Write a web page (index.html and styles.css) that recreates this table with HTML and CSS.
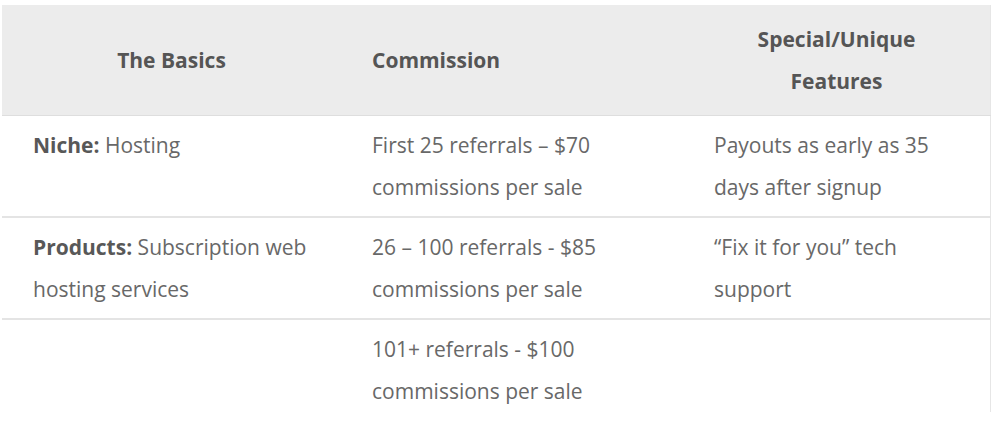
FILE: index.html
```html
<!DOCTYPE html>
<html>
<head>
<meta charset="utf-8">
<link rel="stylesheet" href="styles.css">
</head>
<body>
<table class="aff">
  <thead>
    <tr>
      <th class="c1 center">The Basics</th>
      <th class="c2">Commission</th>
      <th class="c3 center">Special/Unique<br>Features</th>
    </tr>
  </thead>
  <tbody>
    <tr>
      <td><strong>Niche:</strong> Hosting</td>
      <td>First 25 referrals – $70<br>commissions per sale</td>
      <td>Payouts as early as 35<br>days after signup</td>
    </tr>
    <tr>
      <td><strong>Products:</strong> Subscription web<br>hosting services</td>
      <td>26 – 100 referrals - $85<br>commissions per sale</td>
      <td>“Fix it for you” tech<br>support</td>
    </tr>
    <tr>
      <td></td>
      <td>101+ referrals - $100<br>commissions per sale</td>
      <td></td>
    </tr>
  </tbody>
</table>
</body>
</html>
```

FILE: styles.css
```css
html, body {
  margin: 0;
  padding: 0;
  background: #ffffff;
}
body {
  padding: 5px 0 0 2px;
  font-family: "Open Sans", "Liberation Sans", sans-serif;
  font-size: 21px;
  line-height: 42px;
  color: #686868;
}
.aff {
  width: 989px;
  border-collapse: collapse;
  border-right: 1px solid #e6e6e6;
}
.aff th {
  background: #ececec;
  color: #555555;
  font-weight: 700;
  text-align: left;
  padding: 13px 31px;
  vertical-align: middle;
  border-bottom: 1px solid #dedede;
}
.aff th.center {
  text-align: center;
}
.aff .c1 { width: 277px; }
.aff .c2 { width: 280px; }
.aff td {
  padding: 8px 31px;
  vertical-align: top;
  border-bottom: 2px solid #e4e4e4;
}
.aff tbody tr:last-child td {
  border-bottom: none;
  padding-bottom: 0;
}
.aff strong {
  color: #585858;
  font-weight: 700;
}
```
